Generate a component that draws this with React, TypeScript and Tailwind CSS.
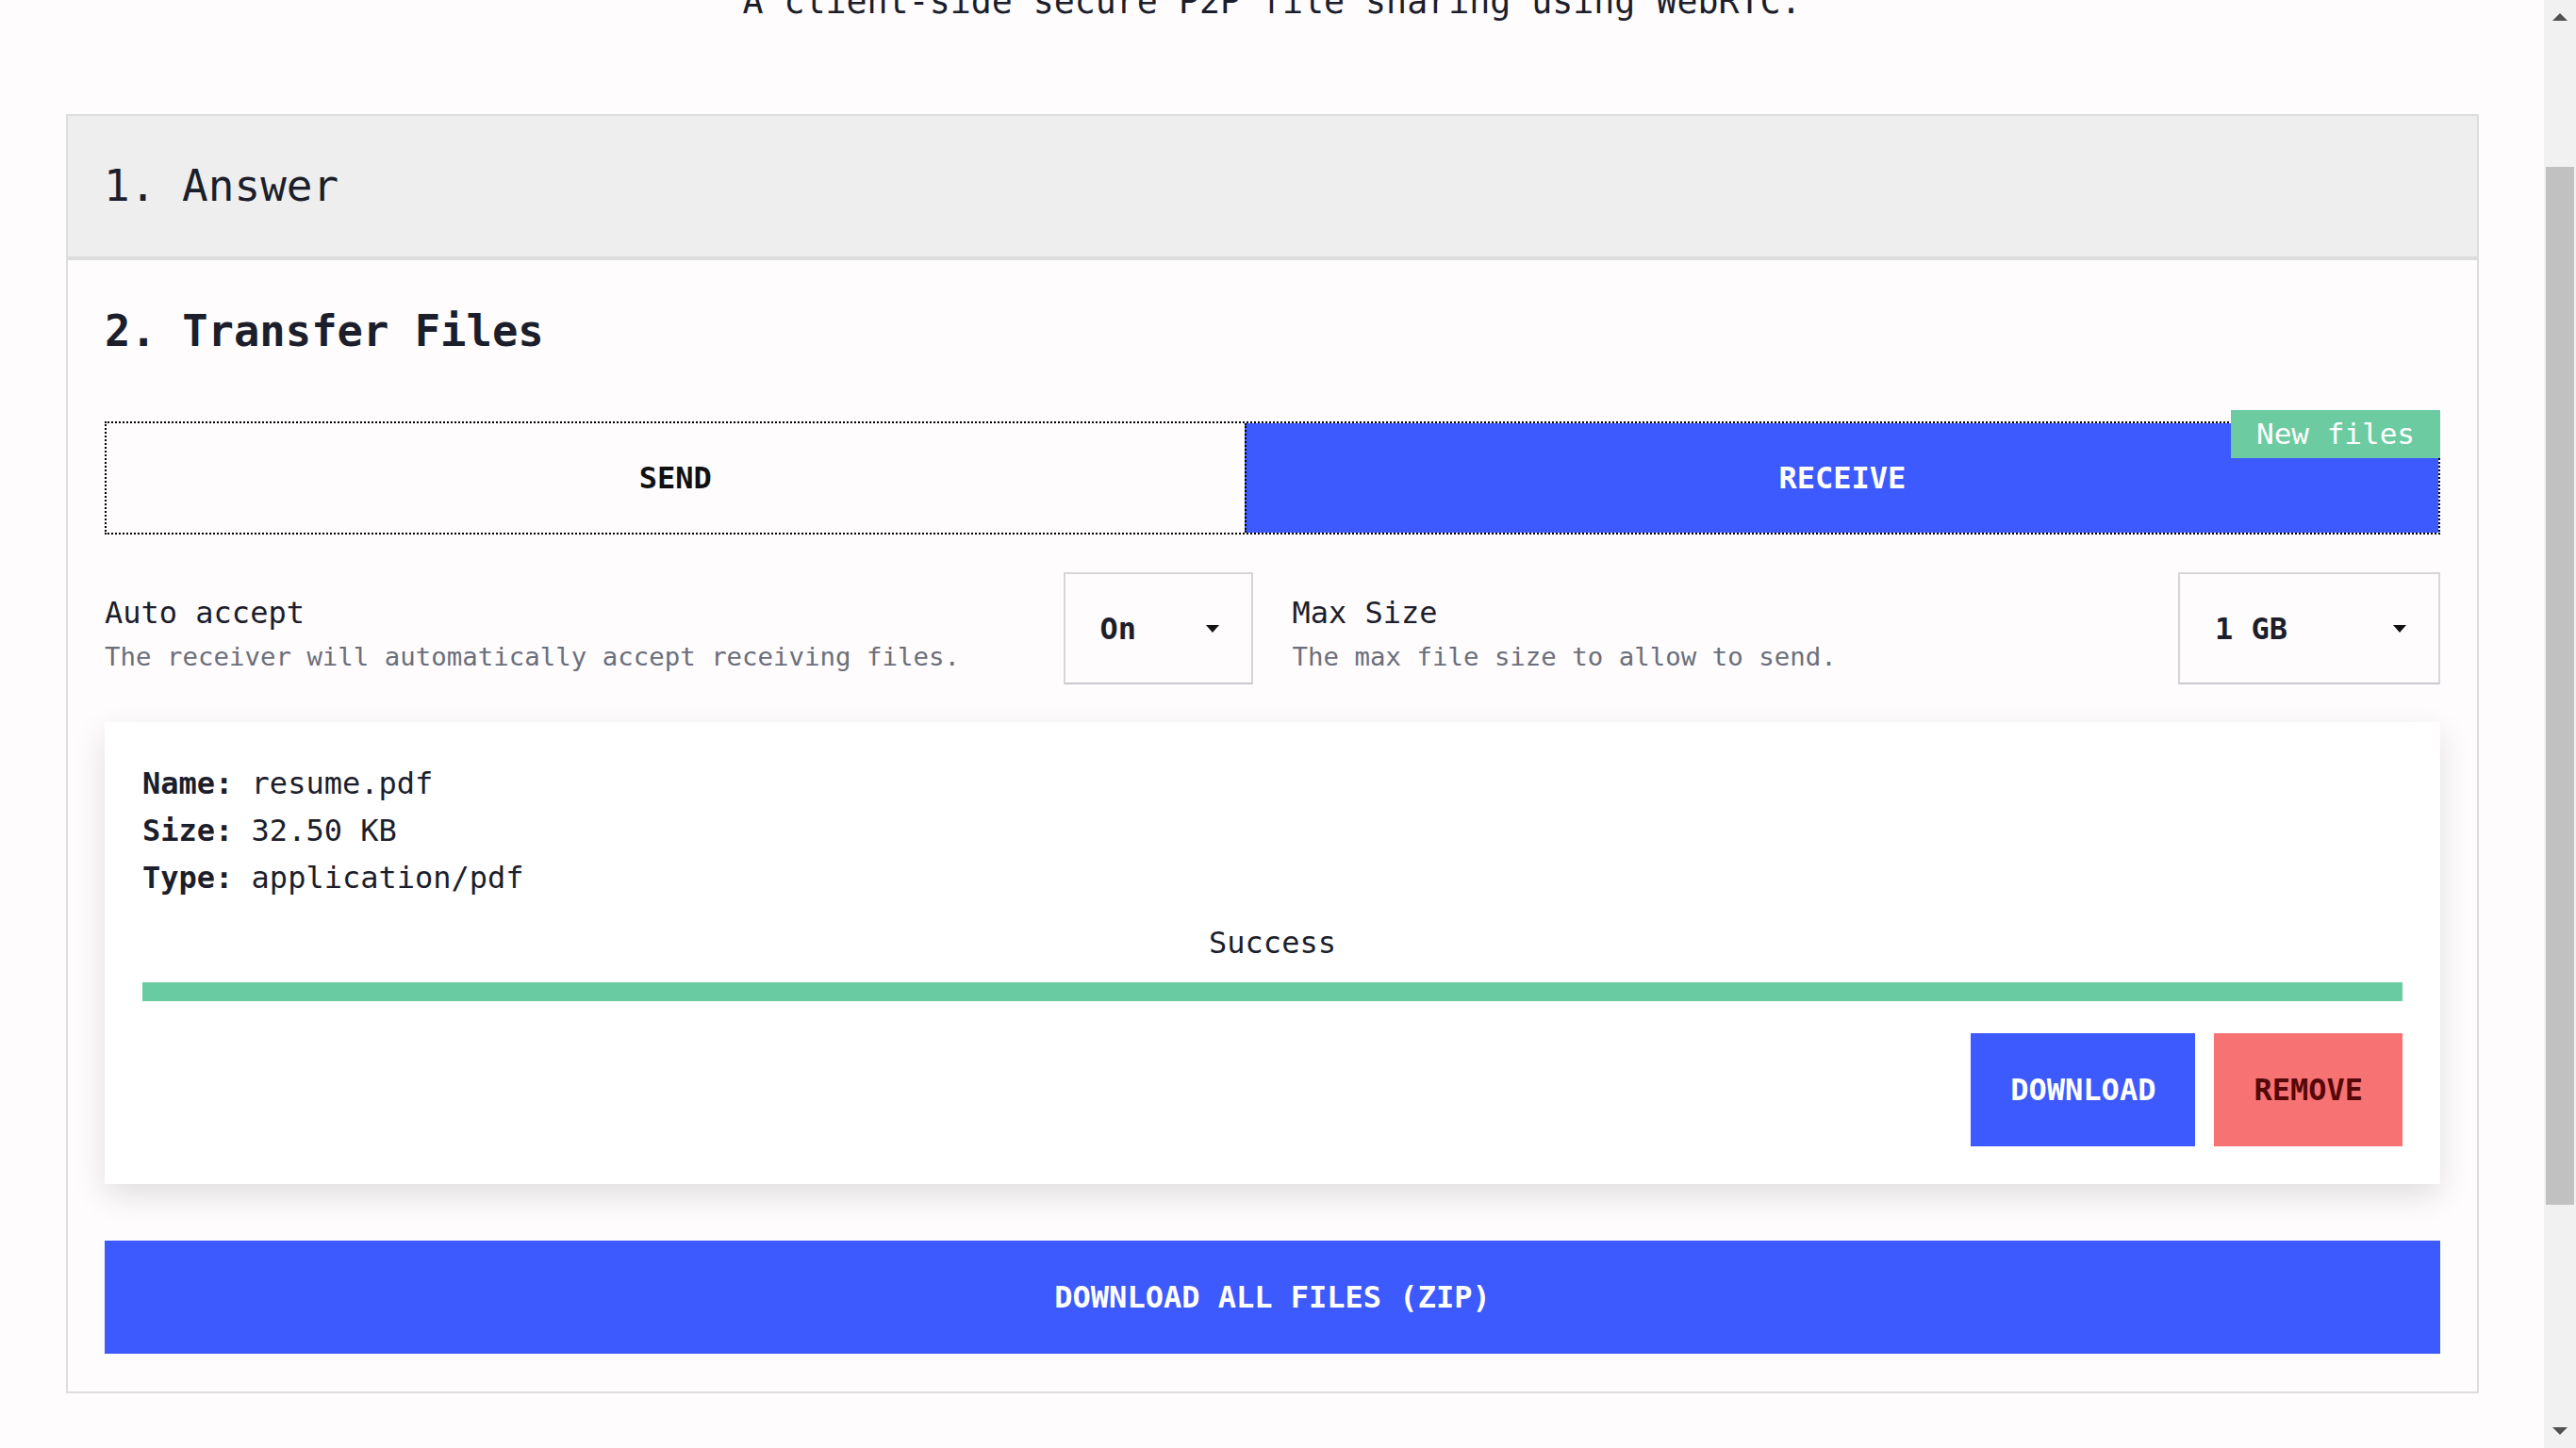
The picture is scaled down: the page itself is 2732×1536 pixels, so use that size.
import React from "react";

const mono = { fontFamily: '"DejaVu Sans Mono", "Liberation Mono", monospace' };

function Caret() {
  return (
    <svg width="14" height="8" viewBox="0 0 14 8" className="shrink-0">
      <polygon points="0,0 14,0 7,8" fill="#111" />
    </svg>
  );
}

function Setting({
  label,
  desc,
  value,
  width,
}: {
  label: string;
  desc: string;
  value: string;
  width: string;
}) {
  return (
    <div className="flex items-start justify-between">
      <div className="pt-[19px]">
        <div className="text-[32px] leading-[48px] text-[#1c1e2b]">{label}</div>
        <div className="mt-[3px] text-[27.4px] leading-[40px] text-[#6b6f7a]">{desc}</div>
      </div>
      <div
        className={`${width} flex h-[119px] items-center justify-between border-2 border-[#d6d6da] border-b-[#c8c8ce] pl-[37px] pr-[34px] text-[32px] font-bold text-[#1c1e2b]`}
      >
        <span>{value}</span>
        <Caret />
      </div>
    </div>
  );
}

export default function App() {
  return (
    <div className="flex h-[1536px] w-[2732px] overflow-hidden bg-[#fefcfd]" style={mono}>
      <div className="h-full flex-1 overflow-hidden">
        <div className="mt-[-26px]">
          <div className="text-center text-[36.6px] leading-[56px] text-[#1c1e2b]">
            A client-side secure P2P file sharing using WebRTC.
          </div>

          <div className="ml-[70px] mt-[91px] w-[2559px] border-2 border-[#dddddd] bg-[#fefcfd]">
            <div className="flex h-[153px] items-center border-b-4 border-[#dddddd] bg-[#eeeeee] pl-[38px] text-[46px] text-[#1c1e2b]">
              1. Answer
            </div>

            <div className="px-[39px] pb-[40px] pt-[41px]">
              <h2 className="text-[45.5px] font-bold leading-[69px] text-[#1c1e2b]">2. Transfer Files</h2>

              <div className="relative mt-[61px] flex h-[120px] border-2 border-dotted border-black text-[32px] font-bold">
                <div className="flex flex-auto items-center justify-center bg-[#fefcfd] text-[#111]">SEND</div>
                <div className="flex flex-auto items-center justify-center border-l-2 border-dotted border-black bg-[#3d5afe] text-white">
                  RECEIVE
                </div>
                <div className="absolute right-[-2px] top-[-14px] flex h-[51px] items-center bg-[#6ccba0] px-[27px] text-[31px] font-normal text-white">
                  New files
                </div>
              </div>

              <div className="mt-[40px] grid grid-cols-2 gap-[42px]">
                <Setting
                  label="Auto accept"
                  desc="The receiver will automatically accept receiving files."
                  value="On"
                  width="w-[201px]"
                />
                <Setting
                  label="Max Size"
                  desc="The max file size to allow to send."
                  value="1 GB"
                  width="w-[278px]"
                />
              </div>

              <div className="mt-[40px] bg-white p-[40px] shadow-[0_12px_32px_rgba(0,0,0,0.12)]">
                <div className="text-[32px] leading-[50px] text-[#1c1e2b]">
                  <div>
                    <span className="font-bold">Name:</span> resume.pdf
                  </div>
                  <div>
                    <span className="font-bold">Size:</span> 32.50 KB
                  </div>
                  <div>
                    <span className="font-bold">Type:</span> application/pdf
                  </div>
                </div>
                <div className="mt-[20px] text-center text-[32px] leading-[48px] text-[#1c1e2b]">Success</div>
                <div className="mt-[18px] h-[20px] w-full bg-[#69cba1]" />
                <div className="mt-[34px] flex justify-end gap-[20px] text-[32px] font-bold">
                  <button className="flex h-[120px] items-center bg-[#3d5afe] px-[42px] text-white">DOWNLOAD</button>
                  <button className="flex h-[120px] items-center bg-[#f77272] px-[42px] text-[#560808]">REMOVE</button>
                </div>
              </div>

              <button className="mt-[60px] flex h-[120px] w-full items-center justify-center bg-[#3d5afe] text-[32px] font-bold text-white">
                DOWNLOAD ALL FILES (ZIP)
              </button>
            </div>
          </div>
        </div>
      </div>

      <div className="flex h-full w-[34px] flex-col items-center bg-[#f1f1f1]">
        <svg width="16" height="8" viewBox="0 0 16 8" className="mt-[14px]">
          <polygon points="8,0 16,8 0,8" fill="#505050" />
        </svg>
        <div className="mt-[155px] h-[1101px] w-[30px] bg-[#c1c1c1]" />
        <div className="flex-1" />
        <svg width="16" height="8" viewBox="0 0 16 8" className="mb-[14px]">
          <polygon points="0,0 16,0 8,8" fill="#505050" />
        </svg>
      </div>
    </div>
  );
}
